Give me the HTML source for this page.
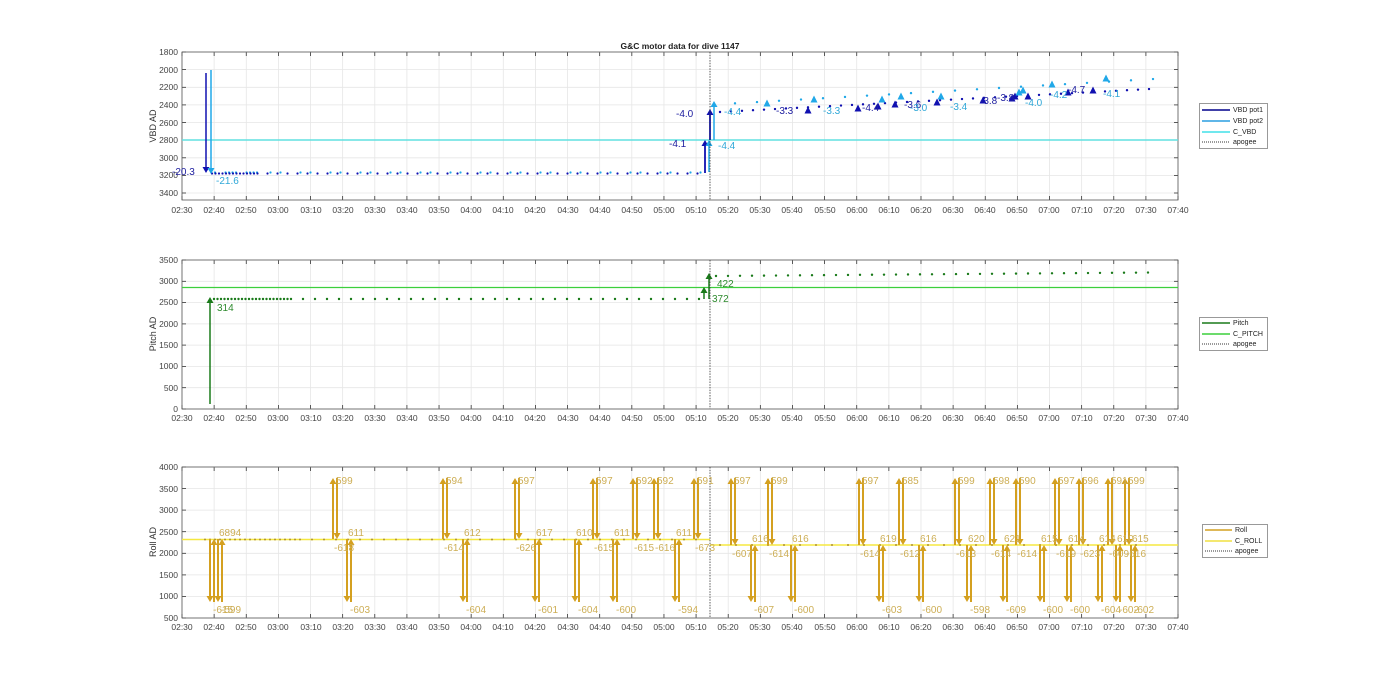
<!DOCTYPE html>
<html><head><meta charset="utf-8"><style>
html,body{margin:0;padding:0;background:#fff;width:1400px;height:693px;overflow:hidden}
svg{display:block;font-family:"Liberation Sans",sans-serif}
.t{font-size:8.5px;fill:#444}
.yl{font-size:9px;fill:#333}
</style></head><body>
<svg id="s" width="1400" height="693" xmlns="http://www.w3.org/2000/svg">
<rect width="1400" height="693" fill="#fff"/>
<g id="grid"></g>
<g id="data"></g>
<text x="680" y="49" text-anchor="middle" style="font-size:8.5px;font-weight:bold" fill="#222">G&amp;C motor data for dive 1147</text>
<g class="t" text-anchor="end">
<text x="178" y="55">1800</text><text x="178" y="73">2000</text><text x="178" y="90">2200</text><text x="178" y="108">2400</text><text x="178" y="126">2600</text><text x="178" y="143">2800</text><text x="178" y="161">3000</text><text x="178" y="178">3200</text><text x="178" y="196">3400</text>
<text x="178" y="263">3500</text><text x="178" y="284">3000</text><text x="178" y="305">2500</text><text x="178" y="327">2000</text><text x="178" y="348">1500</text><text x="178" y="369">1000</text><text x="178" y="391">500</text><text x="178" y="412">0</text>
<text x="178" y="470">4000</text><text x="178" y="492">3500</text><text x="178" y="513">3000</text><text x="178" y="535">2500</text><text x="178" y="556">2000</text><text x="178" y="578">1500</text><text x="178" y="599">1000</text><text x="178" y="621">500</text>
</g>
<text class="yl" transform="translate(156,126) rotate(-90)" text-anchor="middle">VBD AD</text>
<text class="yl" transform="translate(156,334) rotate(-90)" text-anchor="middle">Pitch AD</text>
<text class="yl" transform="translate(156,542) rotate(-90)" text-anchor="middle">Roll AD</text>
<g class="t" text-anchor="middle" id="xl">
<g transform="translate(0,213)">
<text x="182">02:30</text><text x="214">02:40</text><text x="246">02:50</text><text x="278">03:00</text><text x="311">03:10</text><text x="343">03:20</text><text x="375">03:30</text><text x="407">03:40</text><text x="439">03:50</text><text x="471">04:00</text><text x="503">04:10</text><text x="535">04:20</text><text x="568">04:30</text><text x="600">04:40</text><text x="632">04:50</text><text x="664">05:00</text><text x="696">05:10</text><text x="728">05:20</text><text x="760">05:30</text><text x="792">05:40</text><text x="825">05:50</text><text x="857">06:00</text><text x="889">06:10</text><text x="921">06:20</text><text x="953">06:30</text><text x="985">06:40</text><text x="1017">06:50</text><text x="1049">07:00</text><text x="1082">07:10</text><text x="1114">07:20</text><text x="1146">07:30</text><text x="1178">07:40</text>
</g>
<g transform="translate(0,421)">
<text x="182">02:30</text><text x="214">02:40</text><text x="246">02:50</text><text x="278">03:00</text><text x="311">03:10</text><text x="343">03:20</text><text x="375">03:30</text><text x="407">03:40</text><text x="439">03:50</text><text x="471">04:00</text><text x="503">04:10</text><text x="535">04:20</text><text x="568">04:30</text><text x="600">04:40</text><text x="632">04:50</text><text x="664">05:00</text><text x="696">05:10</text><text x="728">05:20</text><text x="760">05:30</text><text x="792">05:40</text><text x="825">05:50</text><text x="857">06:00</text><text x="889">06:10</text><text x="921">06:20</text><text x="953">06:30</text><text x="985">06:40</text><text x="1017">06:50</text><text x="1049">07:00</text><text x="1082">07:10</text><text x="1114">07:20</text><text x="1146">07:30</text><text x="1178">07:40</text>
</g>
<g transform="translate(0,630)">
<text x="182">02:30</text><text x="214">02:40</text><text x="246">02:50</text><text x="278">03:00</text><text x="311">03:10</text><text x="343">03:20</text><text x="375">03:30</text><text x="407">03:40</text><text x="439">03:50</text><text x="471">04:00</text><text x="503">04:10</text><text x="535">04:20</text><text x="568">04:30</text><text x="600">04:40</text><text x="632">04:50</text><text x="664">05:00</text><text x="696">05:10</text><text x="728">05:20</text><text x="760">05:30</text><text x="792">05:40</text><text x="825">05:50</text><text x="857">06:00</text><text x="889">06:10</text><text x="921">06:20</text><text x="953">06:30</text><text x="985">06:40</text><text x="1017">06:50</text><text x="1049">07:00</text><text x="1082">07:10</text><text x="1114">07:20</text><text x="1146">07:30</text><text x="1178">07:40</text>
</g>
</g>
<g style="font-size:10px">
<text x="172" y="175" fill="#2020a0">-20.3</text>
<text x="216" y="184" fill="#30a8d8">-21.6</text>
<text x="669" y="147" fill="#2020a0">-4.1</text>
<text x="676" y="117" fill="#2020a0">-4.0</text>
<text x="718" y="149" fill="#30a8d8">-4.4</text>
<text x="724" y="115" fill="#30a8d8">-4.4</text>
<text x="776" y="114" fill="#2020a0">-3.3</text>
<text x="823" y="114" fill="#30a8d8">-3.3</text>
<text x="862" y="111" fill="#2020a0">-4.4</text>
<text x="904" y="108" fill="#2020a0">-3.6</text>
<text x="910" y="111" fill="#30a8d8">-3.0</text>
<text x="950" y="110" fill="#30a8d8">-3.4</text>
<text x="980" y="104" fill="#2020a0">-3.8</text>
<text x="997" y="101" fill="#2020a0">-3.8</text>
<text x="1025" y="106" fill="#30a8d8">-4.0</text>
<text x="1050" y="98" fill="#30a8d8">-4.2</text>
<text x="1068" y="93" fill="#2020a0">-4.7</text>
<text x="1103" y="97" fill="#30a8d8">-4.1</text>
</g>
<g style="font-size:10px" fill="#2e8b2e">
<text x="217" y="311">314</text><text x="717" y="287">422</text><text x="712" y="302">372</text>
</g>
<g id="rl" style="font-size:10px" fill="#cdae55"></g>
<g style="font-size:7px" fill="#222">
<rect x="1199.5" y="103.5" width="68" height="45" fill="#fff" stroke="#999"/>
<line x1="1202" y1="110" x2="1230" y2="110" stroke="#00008b" stroke-width="1.5"/><text x="1233" y="112">VBD pot1</text>
<line x1="1202" y1="121" x2="1230" y2="121" stroke="#2a9ee0" stroke-width="1.5"/><text x="1233" y="123">VBD pot2</text>
<line x1="1202" y1="132" x2="1230" y2="132" stroke="#40e0e8" stroke-width="1.5"/><text x="1233" y="134">C_VBD</text>
<line x1="1202" y1="142" x2="1230" y2="142" stroke="#333" stroke-dasharray="1,1"/><text x="1233" y="144">apogee</text>
<rect x="1199.5" y="317.5" width="68" height="33" fill="#fff" stroke="#999"/>
<line x1="1202" y1="323" x2="1230" y2="323" stroke="#1a7a1a" stroke-width="1.5"/><text x="1233" y="325">Pitch</text>
<line x1="1202" y1="334" x2="1230" y2="334" stroke="#3ccf3c" stroke-width="1.5"/><text x="1233" y="336">C_PITCH</text>
<line x1="1202" y1="344" x2="1230" y2="344" stroke="#333" stroke-dasharray="1,1"/><text x="1233" y="346">apogee</text>
<rect x="1202.5" y="524.5" width="65" height="33" fill="#fff" stroke="#999"/>
<line x1="1205" y1="530" x2="1232" y2="530" stroke="#d4a020" stroke-width="1.5"/><text x="1235" y="532">Roll</text>
<line x1="1205" y1="541" x2="1232" y2="541" stroke="#f0e040" stroke-width="1.5"/><text x="1235" y="543">C_ROLL</text>
<line x1="1205" y1="551" x2="1232" y2="551" stroke="#333" stroke-dasharray="1,1"/><text x="1235" y="553">apogee</text>
</g>
</svg>
<script>
(function(){
var NS="http://www.w3.org/2000/svg",g=document.getElementById('grid'),d=document.getElementById('data'),rl=document.getElementById('rl');
function el(p,tag,a){var e=document.createElementNS(NS,tag);for(var k in a)e.setAttribute(k,a[k]);p.appendChild(e);return e;}
var axes=[{t:52,b:200,yt:[52,69.6,87.3,104.9,122.5,140.1,157.8,175.4,193]},{t:260,b:409,yt:[260,281.3,302.6,323.9,345.1,366.4,387.7,409]},{t:467,b:618,yt:[467,488.6,510.1,531.7,553.3,574.9,596.4,618]}];
axes.forEach(function(a){
 for(var i=0;i<32;i++){var x=182+i*32.13;el(g,'line',{x1:x,x2:x,y1:a.t,y2:a.b,stroke:'#e6e6e6','stroke-width':0.8});
  el(g,'line',{x1:x,x2:x,y1:a.b,y2:a.b-4,stroke:'#333','stroke-width':0.8});el(g,'line',{x1:x,x2:x,y1:a.t,y2:a.t+4,stroke:'#333','stroke-width':0.8});}
 a.yt.forEach(function(y){el(g,'line',{x1:182,x2:1178,y1:y,y2:y,stroke:'#e6e6e6','stroke-width':0.8});
  el(g,'line',{x1:182,x2:186,y1:y,y2:y,stroke:'#333','stroke-width':0.8});el(g,'line',{x1:1174,x2:1178,y1:y,y2:y,stroke:'#333','stroke-width':0.8});});
 el(g,'rect',{x:182,y:a.t,width:996,height:a.b-a.t,fill:'none',stroke:'#555','stroke-width':0.8});
});
function arrow(x,y1,y2,c,w){el(d,'line',{x1:x,x2:x,y1:y1,y2:y2+(y2>y1?-5:5),stroke:c,'stroke-width':w||1.5});
 var s=y2>y1?-1:1;el(d,'polygon',{points:(x-3.5)+','+(y2+6*s)+' '+(x+3.5)+','+(y2+6*s)+' '+x+','+y2,fill:c});}
function tri(x,y,c,s){s=s||4;el(d,'polygon',{points:(x-s)+','+(y+s)+' '+(x+s)+','+(y+s)+' '+x+','+(y-s),fill:c});}
function dot(x,y,c,r){el(d,'circle',{cx:x,cy:y,r:r||1.1,fill:c});}
var dk='#1010b0',lt='#20a8e8';
el(d,'line',{x1:182,x2:1178,y1:140,y2:140,stroke:'#60e0e0','stroke-width':1.6});
for(var x=212;x<705;x+=(x<255?3.5:10)){dot(x,173.5,dk);if(Math.round(x)%3)dot(x+3,172.5,lt);}
arrow(206,73,173,dk,1.5);arrow(211,70,174,lt,1.5);
arrow(705,173,140,dk,1.8);arrow(710,140,109,dk,1.8);arrow(709,172,140,lt,1.5);arrow(714,140,101,lt,1.5);
for(var x=720;x<1150;x+=11){var f=(x-720)/430;dot(x,112-f*23,dk,1.2);if(Math.round(x)%2)dot(x+4,104-f*25,lt,1.2);}
[[808,110],[858,108],[878,106],[895,104],[937,102],[983,100],[1012,98],[1015,96],[1028,96],[1068,92],[1093,90]].forEach(function(p){tri(p[0],p[1],dk,3.5);});
[[767,103],[814,99],[882,99],[901,96],[941,96],[1019,92],[1023,90],[1052,84],[1106,78]].forEach(function(p){tri(p[0],p[1],lt,3.5);});
el(d,'line',{x1:710,x2:710,y1:52,y2:200,stroke:'#333','stroke-dasharray':'1.5,1.2','stroke-width':0.8});
var gr='#1a7a1a';
el(d,'line',{x1:182,x2:1178,y1:287.5,y2:287.5,stroke:'#3ccf3c','stroke-width':1.2});
for(var x=214;x<700;x+=(x<290?3.5:12))dot(x,299,gr,1.2);
for(var x=716;x<1150;x+=12)dot(x,276-(x-716)*0.008,gr,1.2);
arrow(210,404,297,gr,1.5);arrow(704,299,287,gr,1.5);arrow(709,299,273,gr,1.5);
el(d,'line',{x1:710,x2:710,y1:260,y2:409,stroke:'#333','stroke-dasharray':'1.5,1.2','stroke-width':0.8});
var gd='#d4a020';
el(d,'line',{x1:182,x2:710,y1:539.5,y2:539.5,stroke:'#f5e840','stroke-width':1.5});
el(d,'line',{x1:710,x2:1178,y1:545,y2:545,stroke:'#f5e840','stroke-width':1.5});
for(var x=205;x<700;x+=(x<300?5:12))dot(x,539.5,'#b09030',1);
for(var x=720;x<1150;x+=16)dot(x,545,'#b09030',1);
var H=478,L=602;
var ev=[[210,'L','-615',null],[218,'L','-599','6894'],[333,'H','599','-618'],[347,'L','-603','611'],[443,'H','594','-614'],[463,'L','-604','612'],[515,'H','597','-626'],[535,'L','-601','617'],[575,'L','-604','610'],[593,'H','597','-615'],[613,'L','-600','611'],[633,'H','592','-615'],[654,'H','592','-616'],[675,'L','-594','611'],[694,'H','591','-673'],
[731,'H','597','-607'],[751,'L','-607','616'],[768,'H','599','-614'],[791,'L','-600','616'],[859,'H','597','-614'],[879,'L','-603','619'],[899,'H','585','-612'],[919,'L','-600','616'],[955,'H','599','-613'],[967,'L','-598','620'],[990,'H','598','-614'],[1003,'L','-609','621'],[1016,'H','590','-614'],[1040,'L','-600','615'],[1055,'H','597','-619'],[1067,'L','-600','614'],[1079,'H','596','-623'],[1098,'L','-604','614'],[1108,'H','591','-609'],[1116,'L','-602','610'],[1125,'H','599','-616'],[1131,'L','-602','615']];
ev.forEach(function(e){var x=e[0],base=x<705?539:545,end=e[1]=='H'?H:L;
 arrow(x,base,end,gd,2);arrow(x+4,end,base,gd,2);
 var t1=el(rl,'text',{x:x+3,y:e[1]=='H'?end+6:end+11});t1.textContent=e[2];
 if(e[3]){var t2=el(rl,'text',{x:x+1,y:e[1]=='H'?base+12:base-3});t2.textContent=e[3];}
});
el(d,'line',{x1:710,x2:710,y1:467,y2:618,stroke:'#333','stroke-dasharray':'1.5,1.2','stroke-width':0.8});
})();
</script>
</body></html>
